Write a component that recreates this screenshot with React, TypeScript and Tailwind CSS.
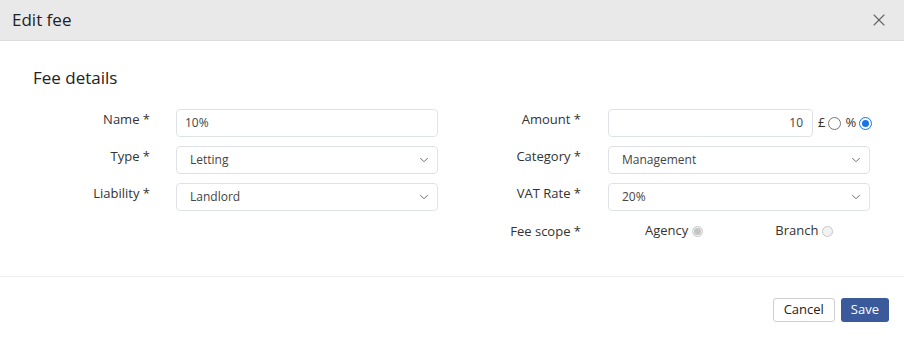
import { ChevronDown, X } from "lucide-react";

const font = { fontFamily: '"Open Sans", "Noto Sans", sans-serif' };

function Label({ children, width }: { children: React.ReactNode; width: string }) {
  return (
    <div className={`shrink-0 text-right text-[13px] leading-[20px] text-[#333] ${width}`}>
      {children}
    </div>
  );
}

function Select({ value }: { value: string }) {
  return (
    <div className="flex h-[28px] w-[262px] items-center justify-between rounded-[4px] border border-[#dfe3e8] bg-white pl-[13px] pr-[6px] text-[12px] text-[#444]">
      <span>{value}</span>
      <ChevronDown className="h-[14px] w-[14px] text-[#555]" strokeWidth={1.5} />
    </div>
  );
}

function Radio({ checked, disabled }: { checked?: boolean; disabled?: boolean }) {
  if (disabled) {
    return (
      <span className="inline-flex h-[11px] w-[11px] items-center justify-center rounded-full border border-[#c8c8c8] bg-[#f2f2f2]">
        {checked && <span className="h-[7px] w-[7px] rounded-full bg-[#c4c4c4]" />}
      </span>
    );
  }
  return (
    <span
      className={`inline-flex h-[13px] w-[13px] items-center justify-center rounded-full border ${
        checked ? "border-[#1a73e8]" : "border-[#767676]"
      } bg-white`}
    >
      {checked && <span className="h-[7px] w-[7px] rounded-full bg-[#1a73e8]" />}
    </span>
  );
}

export default function App() {
  return (
    <div className="h-[340px] w-[904px] overflow-hidden bg-white" style={font}>
      <div className="flex h-[41px] items-center justify-between border-b border-[#dcdcdc] bg-[#e9e9e9] pl-[12px] pr-[15px]">
        <h2 className="text-[17px] text-[#222]">Edit fee</h2>
        <X className="h-[20px] w-[20px] text-[#666]" strokeWidth={1.4} />
      </div>

      <div className="h-[236px] border-b border-[#eeeeee] px-[33px] pt-[25px]">
        <h3 className="text-[17px] leading-[24px] text-[#222]">Fee details</h3>

        <div className="mt-[19px] flex">
          {/* left column */}
          <div className="flex flex-col gap-[9px]">
            <div className="flex">
              <Label width="w-[117px]">Name *</Label>
              <div className="ml-[26px] flex h-[28px] w-[262px] items-center rounded-[4px] border border-[#dfe3e8] pl-[8px] text-[12px] text-[#444]">
                10%
              </div>
            </div>
            <div className="flex">
              <Label width="w-[117px]">Type *</Label>
              <div className="ml-[26px]">
                <Select value="Letting" />
              </div>
            </div>
            <div className="flex">
              <Label width="w-[117px]">Liability *</Label>
              <div className="ml-[26px]">
                <Select value="Landlord" />
              </div>
            </div>
          </div>

          {/* right column */}
          <div className="flex flex-col gap-[9px]">
            <div className="flex">
              <Label width="w-[143px]">Amount *</Label>
              <div className="ml-[27px] flex h-[28px] items-center">
                <div className="flex h-[28px] w-[205px] items-center justify-end rounded-[4px] border border-[#dfe3e8] pr-[9px] text-[12px] text-[#444]">
                  10
                </div>
                <div className="ml-[5px] flex items-center gap-[3px] text-[13px] text-[#333]">
                  <span>£</span>
                  <Radio />
                  <span className="ml-[1px]">%</span>
                  <Radio checked />
                </div>
              </div>
            </div>
            <div className="flex">
              <Label width="w-[143px]">Category *</Label>
              <div className="ml-[27px]">
                <Select value="Management" />
              </div>
            </div>
            <div className="flex">
              <Label width="w-[143px]">VAT Rate *</Label>
              <div className="ml-[27px]">
                <Select value="20%" />
              </div>
            </div>
            <div className="flex pt-[1px]">
              <Label width="w-[143px]">Fee scope *</Label>
              <div className="ml-[64px] flex h-[20px] items-center text-[13px] text-[#333]">
                <span>Agency</span>
                <span className="ml-[4px] inline-flex">
                  <Radio checked disabled />
                </span>
                <span className="ml-[72px]">Branch</span>
                <span className="ml-[4px] inline-flex">
                  <Radio disabled />
                </span>
              </div>
            </div>
          </div>
        </div>
      </div>

      <div className="flex justify-end gap-[6px] pr-[15px] pt-[21px]">
        <button className="h-[24px] rounded-[3px] border border-[#cfcfcf] bg-white px-[10px] text-[13px] text-[#222]">
          Cancel
        </button>
        <button className="h-[24px] rounded-[3px] bg-[#3a5a9c] px-[10px] text-[13px] text-white">
          Save
        </button>
      </div>
    </div>
  );
}
